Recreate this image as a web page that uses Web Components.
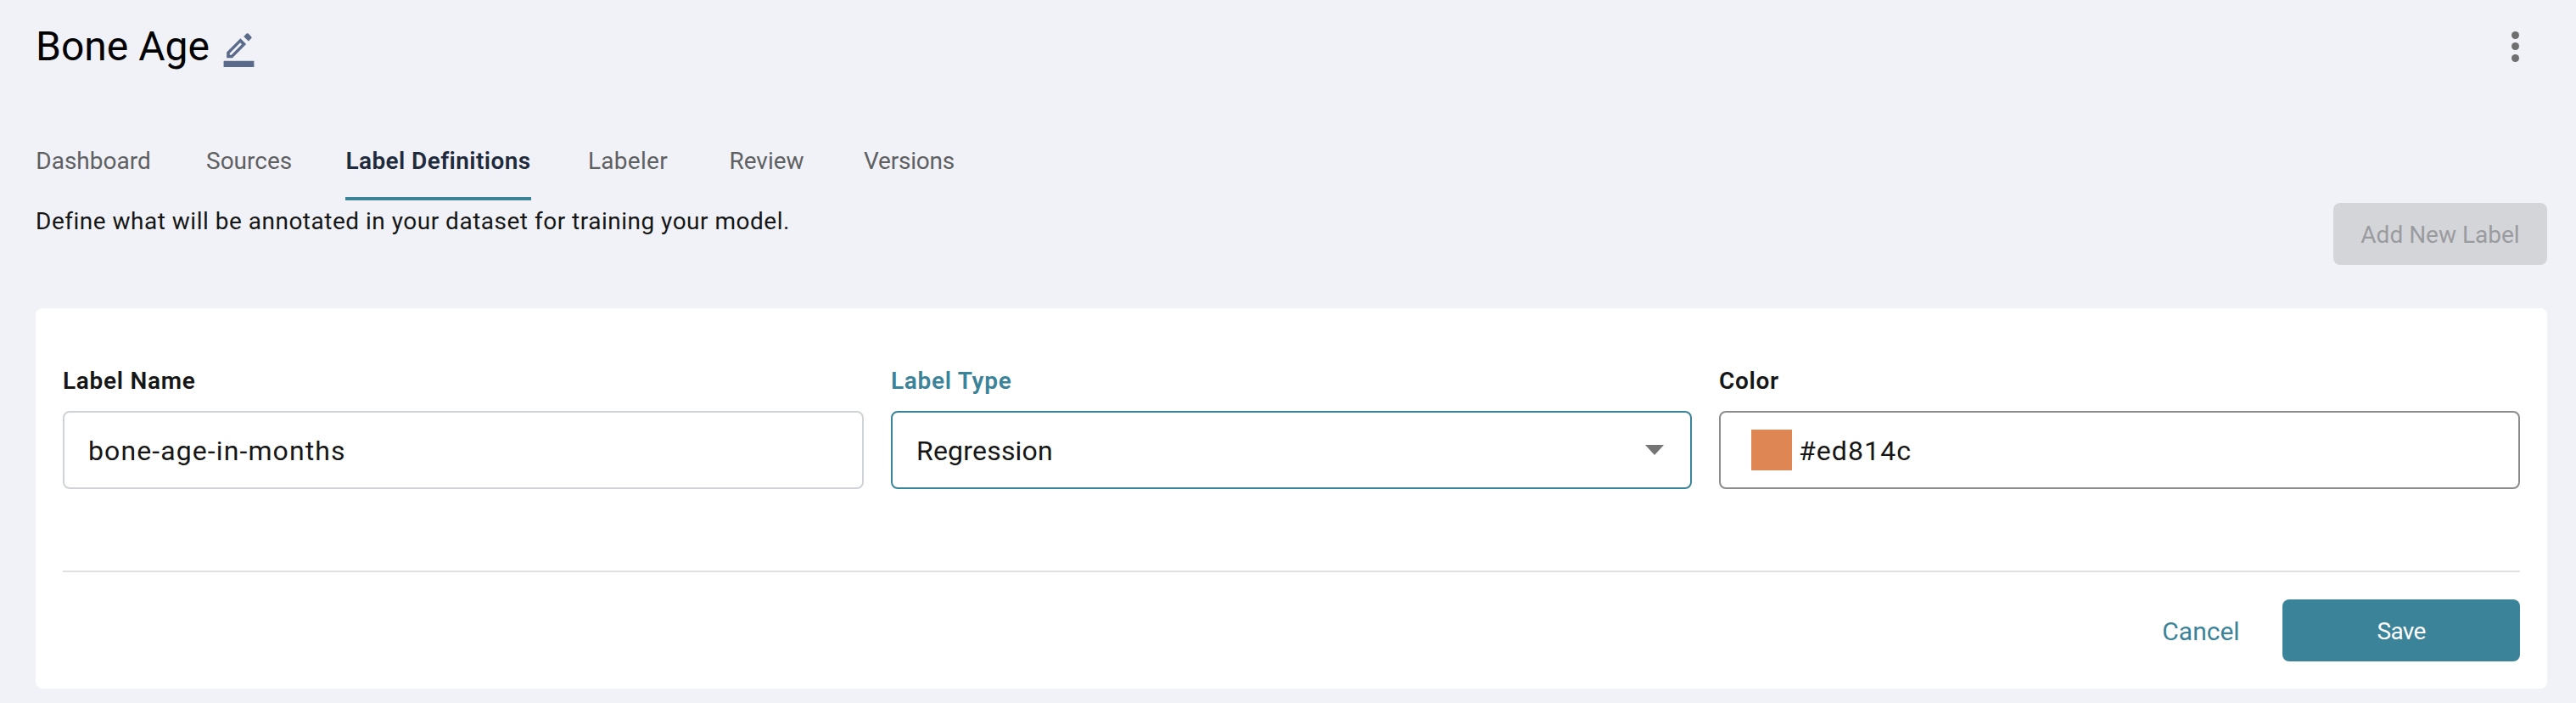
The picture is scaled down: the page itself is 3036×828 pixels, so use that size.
<!DOCTYPE html>
<html>
<head>
<meta charset="utf-8">
<title>Bone Age</title>
<style>
  body {
    margin: 0;
    background-color: #f0f2f7;
    font-family: Roboto, "Liberation Sans", sans-serif;
    color: #161616;
  }
</style>
</head>
<body>

<project-page>
  <project-header slot="header">Bone Age</project-header>
  <tab-bar slot="tabs">
    <nav-tab w="136">Dashboard</nav-tab>
    <nav-tab w="99">Sources</nav-tab>
    <nav-tab w="219" active>Label Definitions</nav-tab>
    <nav-tab w="98" style="letter-spacing:.3px">Labeler</nav-tab>
    <nav-tab w="99">Review</nav-tab>
    <nav-tab w="107" style="letter-spacing:-.2px">Versions</nav-tab>
  </tab-bar>
  <intro-row slot="intro">
    Define what will be annotated in your dataset for training your model.
    <ui-button slot="action" kind="disabled">Add New Label</ui-button>
  </intro-row>
  <label-card slot="card">
    <form-field slot="fields" label="Label Name">
      <field-box tone="plain" style="letter-spacing:1.1px">bone-age-in-months</field-box>
    </form-field>
    <form-field slot="fields" label="Label Type" focused>
      <field-box tone="focus" arrow style="letter-spacing:.2px">Regression</field-box>
    </form-field>
    <form-field slot="fields" label="Color">
      <field-box tone="dark" style="letter-spacing:1.1px"><color-swatch slot="before" color="#de8654"></color-swatch>#ed814c</field-box>
    </form-field>
    <ui-button slot="actions" kind="link">Cancel</ui-button>
    <ui-button slot="actions" kind="primary">Save</ui-button>
  </label-card>
</project-page>

<script>
class ProjectPage extends HTMLElement {
  connectedCallback() {
    this.attachShadow({ mode: 'open' }).innerHTML = `
      <style>
        :host { display: block; padding: 0 34px 0 42px; }
        .card { margin-top: 51px; }
      </style>
      <slot name="header"></slot>
      <slot name="tabs"></slot>
      <slot name="intro"></slot>
      <div class="card"><slot name="card"></slot></div>
    `;
  }
}

class ProjectHeader extends HTMLElement {
  connectedCallback() {
    this.attachShadow({ mode: 'open' }).innerHTML = `
      <style>
        :host { display: flex; align-items: center; height: 109px; }
        h1 { margin: 0; font-size: 48px; font-weight: 400; line-height: 48px; color: #000; }
        .edit { display: block; width: 43px; height: 43px; margin: 5px 0 0 13px; fill: #5a6a8a; }
        .more { display: flex; flex-direction: column; gap: 4.5px; margin-left: auto; margin-right: 33.5px; }
        .more i { display: block; width: 9px; height: 9px; border-radius: 50%; background: #6f6f6f; }
      </style>
      <h1><slot></slot></h1>
      <svg class="edit" viewBox="0 0 24 24">
        <path d="M22 24H2v-4h20z"/>
        <path fill-rule="evenodd" d="M13.06 5.19l3.75 3.75L7.75 18H4v-3.75zM6 14.95v1.05h1.05l6.9-7-1.05-1.05z"/>
        <path d="M15.2 3.9l1.9-1.9c.3-.3.8-.3 1.1 0l2 2c.3.3.3.8 0 1.1l-1.9 1.9z"/>
      </svg>
      <div class="more"><i></i><i></i><i></i></div>
    `;
  }
}

class TabBar extends HTMLElement {
  connectedCallback() {
    this.attachShadow({ mode: 'open' }).innerHTML = `
      <style>
        :host { display: flex; gap: 65px; margin-top: 61px; }
      </style>
      <slot></slot>
    `;
  }
}

class NavTab extends HTMLElement {
  connectedCallback() {
    const active = this.hasAttribute('active');
    this.attachShadow({ mode: 'open' }).innerHTML = `
      <style>
        :host {
          display: block;
          box-sizing: border-box;
          width: ${this.getAttribute('w')}px;
          padding: 2px 0 24px;
          border-bottom: 4px solid ${active ? '#3b8398' : 'transparent'};
          font-size: 28px;
          line-height: 36px;
          text-align: center;
          white-space: nowrap;
          font-weight: ${active ? 600 : 400};
          color: ${active ? '#1f2a3c' : '#5f6062'};
          ${active ? 'letter-spacing: .4px;' : ''}
        }
      </style>
      <slot></slot>
    `;
  }
}

class IntroRow extends HTMLElement {
  connectedCallback() {
    this.attachShadow({ mode: 'open' }).innerHTML = `
      <style>
        :host { display: flex; justify-content: space-between; align-items: flex-start; }
        p { margin: 7px 0 0; font-size: 28px; line-height: 36px; letter-spacing: .5px; color: #161616; }
        .action { margin-top: 3px; }
      </style>
      <p><slot></slot></p>
      <div class="action"><slot name="action"></slot></div>
    `;
  }
}

class UiButton extends HTMLElement {
  connectedCallback() {
    const kinds = {
      disabled: 'width: 252px; background: #d4d5d9; color: #9a9b9f; font-size: 28px;',
      primary: 'width: 280px; background: #3b8398; color: #fff; font-size: 28px; letter-spacing: -.7px;',
      link: 'width: 90px; color: #3b8398; font-size: 30px;'
    };
    this.attachShadow({ mode: 'open' }).innerHTML = `
      <style>
        :host {
          display: flex;
          align-items: center;
          justify-content: center;
          box-sizing: border-box;
          height: 73px;
          padding-top: 2px;
          border-radius: 8px;
          white-space: nowrap;
          ${kinds[this.getAttribute('kind')]}
        }
      </style>
      <slot></slot>
    `;
  }
}

class LabelCard extends HTMLElement {
  connectedCallback() {
    this.attachShadow({ mode: 'open' }).innerHTML = `
      <style>
        :host { display: block; padding: 68px 32px 32px; background: #fff; border-radius: 8px; }
        .fields { display: grid; grid-template-columns: repeat(3, 1fr); gap: 32px; }
        .actions {
          display: flex;
          justify-content: flex-end;
          align-items: center;
          gap: 51px;
          margin-top: 96px;
          padding-top: 32px;
          border-top: 2px solid #e0e0e2;
        }
      </style>
      <div class="fields"><slot name="fields"></slot></div>
      <div class="actions"><slot name="actions"></slot></div>
    `;
  }
}

class FormField extends HTMLElement {
  connectedCallback() {
    const focused = this.hasAttribute('focused');
    this.attachShadow({ mode: 'open' }).innerHTML = `
      <style>
        :host { display: block; }
        label {
          display: block;
          margin-bottom: 17px;
          font-size: 28px;
          font-weight: 600;
          line-height: 36px;
          letter-spacing: .7px;
          color: ${focused ? '#3b8398' : '#161616'};
        }
      </style>
      <label>${this.getAttribute('label')}</label>
      <slot></slot>
    `;
  }
}

class FieldBox extends HTMLElement {
  connectedCallback() {
    const tones = { plain: '#cfd3d8', focus: '#3b8398', dark: '#8c8c8c' };
    const arrow = this.hasAttribute('arrow')
      ? '<svg class="arrow" viewBox="0 0 22 12"><path d="M0 0h22L11 12z"/></svg>'
      : '';
    this.attachShadow({ mode: 'open' }).innerHTML = `
      <style>
        :host {
          display: flex;
          align-items: center;
          box-sizing: border-box;
          height: 92px;
          padding: 0 31px 0 28px;
          border: 2px solid ${tones[this.getAttribute('tone')]};
          border-radius: 8px;
          background: #fff;
          font-size: 32px;
          color: #161616;
        }
        .text { padding-top: 2px; }
        .arrow { width: 22px; height: 12px; margin-left: auto; fill: #757575; }
      </style>
      <slot name="before"></slot>
      <span class="text"><slot></slot></span>
      ${arrow}
    `;
  }
}

class ColorSwatch extends HTMLElement {
  connectedCallback() {
    this.attachShadow({ mode: 'open' }).innerHTML = `
      <style>
        :host {
          display: block;
          width: 48px;
          height: 48px;
          margin: 0 8px 0 8px;
          background: ${this.getAttribute('color')};
        }
      </style>
    `;
  }
}

customElements.define('project-page', ProjectPage);
customElements.define('project-header', ProjectHeader);
customElements.define('tab-bar', TabBar);
customElements.define('nav-tab', NavTab);
customElements.define('intro-row', IntroRow);
customElements.define('ui-button', UiButton);
customElements.define('label-card', LabelCard);
customElements.define('form-field', FormField);
customElements.define('field-box', FieldBox);
customElements.define('color-swatch', ColorSwatch);
</script>
</body>
</html>
